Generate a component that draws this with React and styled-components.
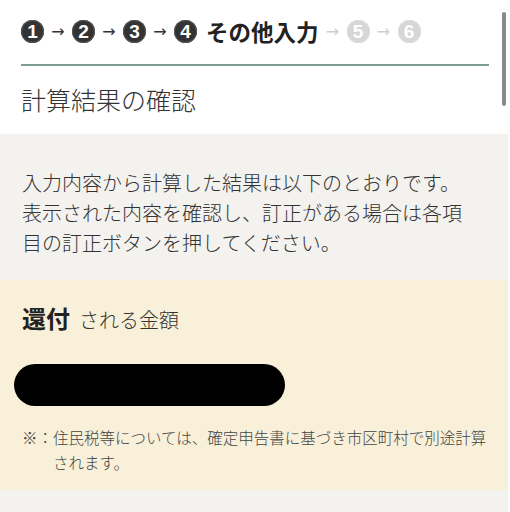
import React from "react"
import styled, { createGlobalStyle } from "styled-components"

const GlobalStyle = createGlobalStyle`
  html, body {
    margin: 0;
    padding: 0;
    background: #fff;
  }
  body {
    font-family: "Noto Sans CJK JP", "Noto Sans", sans-serif;
    color: #333;
  }
`

const steps = [
  { no: 1, done: true },
  { no: 2, done: true },
  { no: 3, done: true },
  { no: 4, done: true, label: "その他入力" },
  { no: 5, done: false },
  { no: 6, done: false },
]

// component
const App = () => {
  return (
    <Page>
      <GlobalStyle />
      <Header>
        <Steps>
          {steps.map((step, i) => (
            <React.Fragment key={step.no}>
              {i > 0 && <Arrow $active={step.done}>→</Arrow>}
              <Circle $active={step.done}>{step.no}</Circle>
              {step.label && <StepLabel>{step.label}</StepLabel>}
            </React.Fragment>
          ))}
        </Steps>
        <Divider />
        <Title>計算結果の確認</Title>
      </Header>

      <Intro>
        入力内容から計算した結果は以下のとおりです。表示された内容を確認し、訂正がある場合は各項目の訂正ボタンを押してください。
      </Intro>

      <Result>
        <ResultHead>
          <strong>還付</strong>
          <span>される金額</span>
        </ResultHead>
        <Amount />
        <Note>
          ※：住民税等については、確定申告書に基づき市区町村で別途計算されます。
        </Note>
      </Result>

      <Footer />
      <Scrollbar />
    </Page>
  )
}

export default App

// styles
const Page = styled.div`
  width: 100%;
  min-height: 512px;
`

const Header = styled.header`
  padding: 20px 21px 17px 21px;
`

const Steps = styled.div`
  display: flex;
  align-items: center;
  height: 23px;
`

const Circle = styled.span`
  display: flex;
  align-items: center;
  justify-content: center;
  flex: none;
  width: 23px;
  height: 23px;
  border-radius: 50%;
  background: ${(p) => (p.$active ? "#333" : "#d6d6d6")};
  box-shadow: inset 0 0 0 1px ${(p) => (p.$active ? "#555" : "#dcdcdc")};
  color: #fff;
  font-family: "Liberation Sans", Arial, sans-serif;
  font-size: 19px;
  font-weight: bold;
  line-height: 1;
`

const Arrow = styled.span`
  flex: none;
  width: 28px;
  text-align: center;
  font-family: "DejaVu Sans", sans-serif;
  font-size: 16px;
  line-height: 24px;
  color: ${(p) => (p.$active ? "#333" : "#cfcfcf")};
`

const StepLabel = styled.span`
  margin-left: 9px;
  font-size: 22.5px;
  font-weight: bold;
  line-height: 23px;
  color: #222;
  white-space: nowrap;
`

const Divider = styled.hr`
  margin: 21px 0 0;
  border: none;
  border-top: 2px solid #7f9c93;
`

const Title = styled.h1`
  margin: 16px 0 0;
  font-size: 25px;
  font-weight: 300;
  line-height: 35px;
  color: #333;
`

const Intro = styled.p`
  width: calc(100% - 2px);
  box-sizing: border-box;
  margin: 0;
  padding: 34px 40px 22px 22px;
  background: #f4f2ee;
  font-size: 20px;
  font-weight: 300;
  line-height: 30px;
  color: #333;
`

const Result = styled.section`
  width: calc(100% - 2px);
  box-sizing: border-box;
  padding: 22px 14px 15px 22px;
  background: #f9f0d9;
`

const ResultHead = styled.h2`
  display: flex;
  align-items: baseline;
  gap: 9px;
  margin: 0;
  line-height: 32px;
  font-weight: normal;
  color: #222;

  strong {
    font-size: 24px;
    font-weight: bold;
  }
  span {
    font-size: 20px;
    font-weight: 300;
    color: #333;
  }
`

const Amount = styled.div`
  width: 271px;
  height: 42px;
  margin: 28px 0 0 -8px;
  border-radius: 21px;
  background: #000;
`

const Note = styled.p`
  margin: 19px 0 0;
  padding-left: 31px;
  text-indent: -31px;
  font-size: 15.5px;
  font-weight: 300;
  line-height: 25px;
  color: #444;
`

const Footer = styled.div`
  width: calc(100% - 2px);
  height: 40px;
  background: #f4f2ee;
`

const Scrollbar = styled.div`
  position: fixed;
  top: 12px;
  right: 4px;
  width: 4px;
  height: 94px;
  border-radius: 2px;
  background: #8a8a8a;
`
